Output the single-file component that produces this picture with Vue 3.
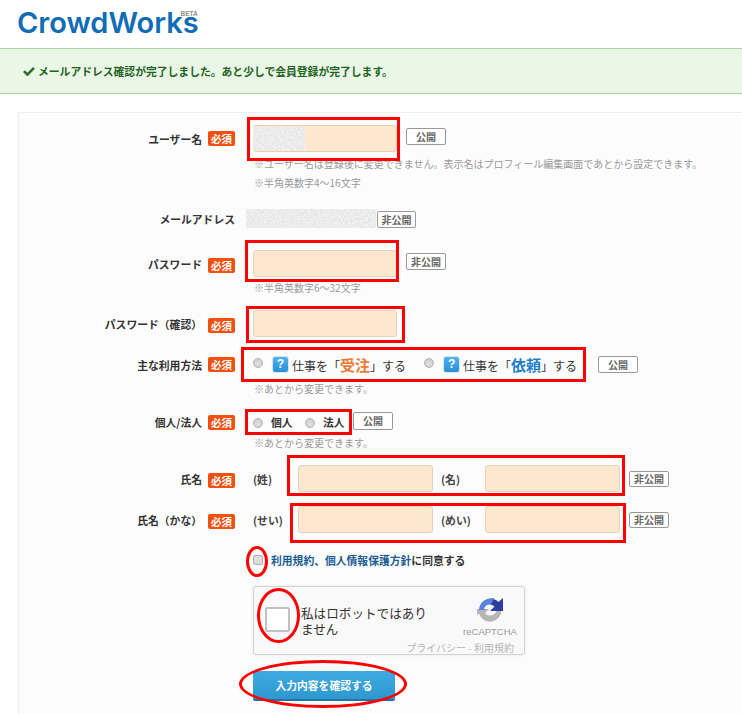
<template>
  <div class="page">
    <header class="logo-bar">
      <div class="logo">CrowdWorks<span class="beta">BETA</span></div>
    </header>

    <div class="alert">
      <svg class="check" viewBox="0 0 12 10" width="12" height="10"><path d="M1 5.2l3.4 3.4L11 1.8" fill="none" stroke="#2a6e2a" stroke-width="2.6" /></svg>
      メールアドレス確認が完了しました。あと少しで会員登録が完了します。
    </div>

    <svg class="defs" width="0" height="0">
      <filter id="noise">
        <feTurbulence type="fractalNoise" baseFrequency="0.7" numOctaves="2" seed="4" />
        <feColorMatrix values="0 0 0 0 0.78  0 0 0 0 0.78  0 0 0 0 0.78  6 0 0 0 -2.6" />
      </filter>
    </svg>

    <form class="card" @submit.prevent>
      <div class="row row-user">
        <div class="head"><label>ユーザー名</label><span class="req">必須</span></div>
        <div class="field">
          <div class="input-wrap">
            <input class="text wide" type="text" />
            <svg class="noise noise-user"><rect width="100%" height="100%" filter="url(#noise)" /></svg>
          </div>
          <span class="tag tag-up">公開</span>
        </div>
      </div>
      <p class="note note-first">※ユーザー名は登録後に変更できません。表示名はプロフィール編集画面であとから設定できます。</p>
      <p class="note">※半角英数字4〜16文字</p>

      <div class="row row-mail">
        <div class="head"><label>メールアドレス</label></div>
        <div class="field field-mail">
          <svg class="noise noise-mail"><rect width="100%" height="100%" filter="url(#noise)" /></svg>
          <span class="tag tag-mail">非公開</span>
        </div>
      </div>

      <div class="row row-pass">
        <div class="head"><label>パスワード</label><span class="req req-low">必須</span></div>
        <div class="field">
          <input class="text wide" type="password" />
          <span class="tag tag-up">非公開</span>
        </div>
      </div>
      <p class="note note-pass">※半角英数字6〜32文字</p>

      <div class="row row-confirm">
        <div class="head"><label>パスワード（確認）</label><span class="req req-low">必須</span></div>
        <div class="field"><input class="text wide" type="password" /></div>
      </div>

      <div class="row row-usage">
        <div class="head"><label>主な利用方法</label><span class="req">必須</span></div>
        <div class="field">
          <span class="radio"></span>
          <span class="help">?</span>
          <span class="usage-text">仕事を「<b class="accept">受注</b>」する</span>
          <span class="radio radio-second"></span>
          <span class="help">?</span>
          <span class="usage-text">仕事を「<b class="order">依頼</b>」する</span>
          <span class="tag tag-usage">公開</span>
        </div>
      </div>
      <p class="note note-usage">※あとから変更できます。</p>

      <div class="row row-kind">
        <div class="head"><label>個人/法人</label><span class="req">必須</span></div>
        <div class="field">
          <span class="radio"></span><span class="kind">個人</span>
          <span class="radio"></span><span class="kind">法人</span>
          <span class="tag tag-kind">公開</span>
        </div>
      </div>
      <p class="note">※あとから変更できます。</p>

      <div class="row row-name">
        <div class="head"><label>氏名</label><span class="req req-low">必須</span></div>
        <div class="field">
          <span class="part">(姓)</span>
          <input class="text half" type="text" />
          <span class="part part-mid">(名)</span>
          <input class="text half" type="text" />
          <span class="tag tag-name">非公開</span>
        </div>
      </div>

      <div class="row row-kana">
        <div class="head"><label>氏名（かな）</label><span class="req req-low">必須</span></div>
        <div class="field">
          <span class="part">(せい)</span>
          <input class="text half" type="text" />
          <span class="part part-mid">(めい)</span>
          <input class="text half" type="text" />
          <span class="tag tag-name">非公開</span>
        </div>
      </div>

      <div class="agree">
        <span class="checkbox"></span>
        <span><a class="link">利用規約、個人情報保護方針</a>に同意する</span>
      </div>

      <div class="captcha">
        <span class="captcha-box"></span>
        <span class="captcha-text">私はロボットではあり<br />ません</span>
        <div class="captcha-brand">
          <svg viewBox="0 0 28 28" width="28" height="28">
            <path d="M1 13L13 13L9 17A6.5 6.5 0 0 0 20.5 14L25.5 14A11.5 11.5 0 0 1 3 17.5L1 19z" fill="#b6b6b6" />
            <path d="M14 2.5A11.5 11.5 0 0 1 22.5 6L27 2L27 15L14 15L18.5 10.5A6.5 6.5 0 0 0 14 8.5z" fill="#2c3f9e" />
            <path d="M3 14A11.5 11.5 0 0 1 12 2.7L18 2L15 8.6A6.5 6.5 0 0 0 8 13L10 14z" fill="#5b82de" />
          </svg>
          <span class="captcha-name">reCAPTCHA</span>
        </div>
        <span class="captcha-links">プライバシー - 利用規約</span>
      </div>

      <button class="submit" type="submit">入力内容を確認する</button>
    </form>

    <!-- red annotations drawn over the form -->
    <i class="mark m-user"></i>
    <i class="mark m-pass"></i>
    <i class="mark m-confirm"></i>
    <i class="mark m-usage"></i>
    <i class="mark m-kind"></i>
    <i class="mark m-name"></i>
    <i class="mark m-kana"></i>
    <i class="mark oval o-check"></i>
    <i class="mark oval o-captcha"></i>
    <i class="mark oval o-submit"></i>
  </div>
</template>

<script setup>
</script>

<style>
html, body {
  margin: 0;
  overflow: hidden;
  background: #fff;
}
</style>

<style scoped>
.page {
  position: relative;
  width: 742px;
  height: 714px;
  overflow: hidden;
  font-family: "Noto Sans CJK JP", "Liberation Sans", sans-serif;
  color: #333;
}

.logo-bar {
  height: 48px;
  padding-left: 17px;
  box-sizing: border-box;
}

.logo {
  position: relative;
  display: inline-block;
  font-family: Inter, sans-serif;
  font-weight: 600;
  font-size: 29px;
  line-height: 46px;
  color: #0f6cb5;
}

.beta {
  position: absolute;
  right: 1px;
  top: 10px;
  font-family: "Liberation Sans", sans-serif;
  font-size: 6.5px;
  font-weight: 700;
  line-height: 7px;
  color: #8f8f8f;
}

.alert {
  height: 46px;
  box-sizing: border-box;
  display: flex;
  align-items: center;
  gap: 3px;
  padding-left: 23px;
  background: #eaf7e6;
  border-top: 1px solid #a6d89f;
  border-bottom: 1px solid #a6d89f;
  font-size: 10.8px;
  font-weight: 700;
  color: #22631f;
}

.defs {
  position: absolute;
}

.card {
  margin: 18px 0 0 18px;
  width: 760px;
  height: 640px;
  padding-top: 12px;
  box-sizing: border-box;
  background: #fcfcfc;
  border: 1px solid #efefef;
}

.row {
  display: flex;
  align-items: center;
}

.head {
  width: 216px;
  flex: none;
  display: flex;
  justify-content: flex-end;
  align-items: center;
  gap: 6px;
  font-size: 10.8px;
  font-weight: 700;
  color: #333;
}

.req {
  width: 27px;
  height: 15px;
  border-radius: 2px;
  background: #f1500e;
  color: #fff;
  font-size: 10.5px;
  line-height: 15px;
  text-align: center;
}

.req-low {
  margin-top: 4px;
}

.field {
  margin-left: 18px;
  display: flex;
  align-items: center;
}

.text {
  height: 27px;
  box-sizing: border-box;
  padding: 0 6px;
  background: #fde8cd;
  border: 1px solid #dfd3bf;
  border-radius: 3px;
  outline: none;
}

.wide { width: 144px; }
.half { width: 135px; }

.input-wrap {
  position: relative;
  display: flex;
}

.noise {
  display: block;
  background: #f1f1f1;
}

.noise-user {
  position: absolute;
  left: 0;
  top: 2px;
  width: 52px;
  height: 23px;
}

.noise-mail {
  width: 130px;
  height: 19px;
}

.tag {
  flex: none;
  width: 40px;
  height: 17px;
  box-sizing: border-box;
  border: 1px solid #999;
  border-radius: 2px;
  background: #fff;
  font-size: 10px;
  font-weight: 700;
  line-height: 15px;
  text-align: center;
  color: #666;
}

.tag-up {
  margin-left: 9px;
  position: relative;
  top: -2px;
}

.tag-mail {
  width: 39px;
  margin-left: 1px;
  position: relative;
  top: 1px;
}

.tag-usage { margin-left: 21px; }
.tag-kind { margin-left: -4px; height: 18px; position: relative; top: -1px; }
.tag-name { margin-left: 9px; height: 16px; line-height: 14px; }

.note {
  margin: 0 0 0 235px;
  font-size: 10px;
  line-height: 19px;
  color: #999;
}

.note-first { margin-top: 2px; }
.note-pass { margin-top: 1px; }
.note-usage { margin-top: 1px; }

.row-mail { margin-top: 17px; }
.field-mail { margin-left: 11px; }
.row-pass { margin-top: 22px; }
.row-confirm { margin-top: 13px; }
.row-usage { margin-top: 14px; height: 27px; }
.row-kind { margin-top: 13px; height: 22px; }
.row-name { margin-top: 13px; }
.row-kana { margin-top: 14px; }

.radio {
  flex: none;
  width: 10px;
  height: 10px;
  box-sizing: border-box;
  border: 1px solid #b5b5b5;
  border-radius: 50%;
  background: radial-gradient(circle at 50% 60%, #e2e2e2, #c6c6c6);
  position: relative;
  top: -2px;
}

.row-kind .radio { top: 1px; }

.radio-second { margin-left: 18px; }

.help {
  flex: none;
  width: 15px;
  height: 15px;
  margin-left: 10px;
  border-radius: 2px;
  background: linear-gradient(#52b2ef, #2a8fd8);
  box-shadow: 0 0 0 1px #d5e8f5;
  color: #fff;
  font-family: "Liberation Sans", sans-serif;
  font-size: 12px;
  font-weight: 700;
  line-height: 15px;
  text-align: center;
}

.usage-text {
  margin-left: 4px;
  font-size: 12px;
  white-space: nowrap;
  color: #333;
}

.accept,
.order {
  font-size: 15px;
  font-weight: 700;
}

.accept { color: #ea7a35; }
.order { color: #1f7fc9; }

.kind {
  width: 42px;
  box-sizing: border-box;
  padding-left: 8px;
  font-size: 10.8px;
  font-weight: 700;
  color: #333;
}

.part {
  width: 45px;
  font-size: 10.8px;
  font-weight: 700;
  color: #444;
  white-space: nowrap;
}

.part-mid {
  width: 44px;
  margin-left: 8px;
}

.agree {
  margin: 17px 0 0 234px;
  height: 20px;
  display: flex;
  align-items: center;
  gap: 8px;
  font-size: 10.8px;
  font-weight: 700;
  color: #333;
}

.checkbox {
  width: 10px;
  height: 10px;
  border: 1px solid #b0b0b0;
  border-radius: 2px;
  background: #dcdcdc;
  box-sizing: border-box;
}

.link { color: #1a5c94; }

.captcha {
  position: relative;
  width: 272px;
  height: 69px;
  margin: 16px 0 0 234px;
  box-sizing: border-box;
  display: flex;
  align-items: center;
  overflow: hidden;
  background: #f9f9f9;
  border: 1px solid #d3d3d3;
  border-radius: 3px;
  box-shadow: 0 0 3px #e4e4e4;
}

.captcha-box {
  flex: none;
  width: 25px;
  height: 25px;
  margin: -3px 0 0 11px;
  box-sizing: border-box;
  border: 2px solid #c1c1c1;
  border-radius: 2px;
  background: #fff;
}

.captcha-text {
  margin: 0 0 0 11px;
  font-family: "Noto Sans CJK JP", sans-serif;
  font-size: 12.6px;
  line-height: 16px;
  color: #333;
  white-space: nowrap;
}

.captcha-brand {
  position: absolute;
  left: 208px;
  top: 9px;
  width: 56px;
  display: flex;
  flex-direction: column;
  align-items: center;
}

.captcha-name {
  margin-top: 2px;
  font-family: "Liberation Sans", sans-serif;
  font-size: 9.5px;
  color: #999;
  line-height: 11px;
}

.captcha-links {
  position: absolute;
  right: 10px;
  bottom: -1px;
  font-size: 10px;
  line-height: 14px;
  color: #b5b5b5;
}

.submit {
  display: block;
  width: 142px;
  height: 30px;
  margin: 16px 0 0 234px;
  padding: 0;
  border: none;
  border-bottom: 2px solid #2573a3;
  border-radius: 2px;
  background: linear-gradient(#3cabe1, #2f97cf);
  color: #fff;
  font-family: inherit;
  font-size: 10.8px;
  font-weight: 700;
}

.mark {
  position: absolute;
  box-sizing: border-box;
  border: 3px solid #f00;
  pointer-events: none;
}

.oval { border-radius: 50%; }

.m-user { left: 247px; top: 117px; width: 153px; height: 44px; }
.m-pass { left: 245px; top: 240px; width: 154px; height: 42px; }
.m-confirm { left: 246px; top: 306px; width: 159px; height: 37px; }
.m-usage { left: 241px; top: 347px; width: 345px; height: 35px; }
.m-kind { left: 245px; top: 409px; width: 107px; height: 26px; }
.m-name { left: 287px; top: 455px; width: 338px; height: 41px; }
.m-kana { left: 290px; top: 503px; width: 336px; height: 40px; }
.o-check { left: 246px; top: 546px; width: 22px; height: 31px; }
.o-captcha { left: 257px; top: 588px; width: 43px; height: 55px; }
.o-submit { left: 239px; top: 660px; width: 168px; height: 48px; }
</style>
